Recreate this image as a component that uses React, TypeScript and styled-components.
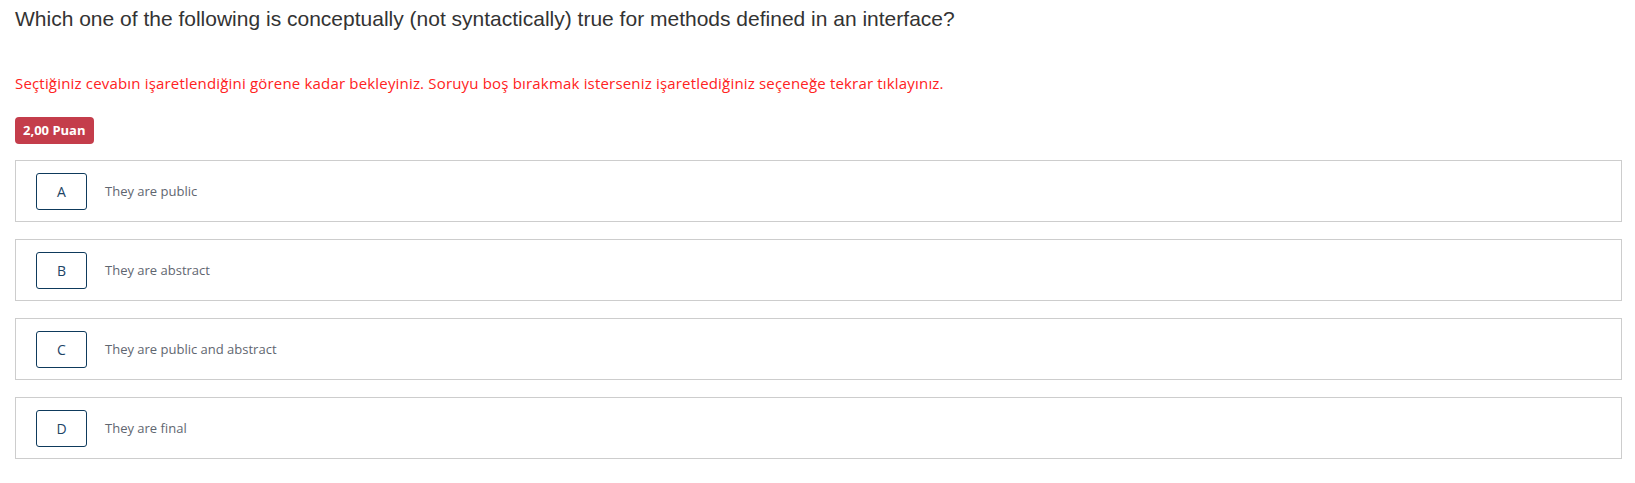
import { FC } from 'react';
import styled, { createGlobalStyle } from 'styled-components';

const GlobalStyle = createGlobalStyle`
  * { box-sizing: border-box; }
  body {
    margin: 0;
    background: #fff;
    font-family: 'Open Sans', 'Noto Sans', sans-serif;
  }
`;

const options = [
  { key: 'A', text: 'They are public' },
  { key: 'B', text: 'They are abstract' },
  { key: 'C', text: 'They are public and abstract' },
  { key: 'D', text: 'They are final' },
];

const App: FC = () => (
  <>
    <GlobalStyle />
    <Page>
      <Question>
        Which one of the following is conceptually (not syntactically) true for
        methods defined in an interface?
      </Question>
      <Warning>
        Seçtiğiniz cevabın işaretlendiğini görene kadar bekleyiniz. Soruyu boş
        bırakmak isterseniz işaretlediğiniz seçeneğe tekrar tıklayınız.
      </Warning>
      <Badge>2,00 Puan</Badge>
      <OptionList>
        {options.map((o) => (
          <Option key={o.key}>
            <Letter>{o.key}</Letter>
            <OptionText>{o.text}</OptionText>
          </Option>
        ))}
      </OptionList>
    </Page>
  </>
);

const Page = styled.div`
  width: 1607px;
  margin-left: 15px;
  padding-top: 7px;
`;

const Question = styled.h1`
  margin: 0;
  font-family: 'Liberation Sans', Arial, sans-serif;
  font-weight: 400;
  font-size: 21px;
  line-height: 24px;
  color: #333;
`;

const Warning = styled.p`
  margin: 42px 0 0;
  font-size: 15px;
  line-height: 20px;
  letter-spacing: 0.18px;
  color: #ff2222;
`;

const Badge = styled.span`
  display: inline-block;
  margin-top: 24px;
  padding: 0 8px;
  height: 27px;
  line-height: 27px;
  border-radius: 4px;
  background: #c43d4b;
  color: #fff;
  font-size: 13px;
  font-weight: 700;
`;

const OptionList = styled.div`
  display: flex;
  flex-direction: column;
  gap: 17px;
  margin-top: 16px;
`;

const Option = styled.div`
  display: flex;
  align-items: center;
  height: 62px;
  padding-left: 20px;
  border: 1px solid #cdcdcd;
  background: #fff;
`;

const Letter = styled.div`
  display: flex;
  align-items: center;
  justify-content: center;
  width: 51px;
  height: 37px;
  border: 1px solid #0e3a5c;
  border-radius: 3px;
  font-size: 14px;
  color: #1d4466;
`;

const OptionText = styled.span`
  margin-left: 18px;
  font-size: 13px;
  color: #5f6670;
`;

export default App;
